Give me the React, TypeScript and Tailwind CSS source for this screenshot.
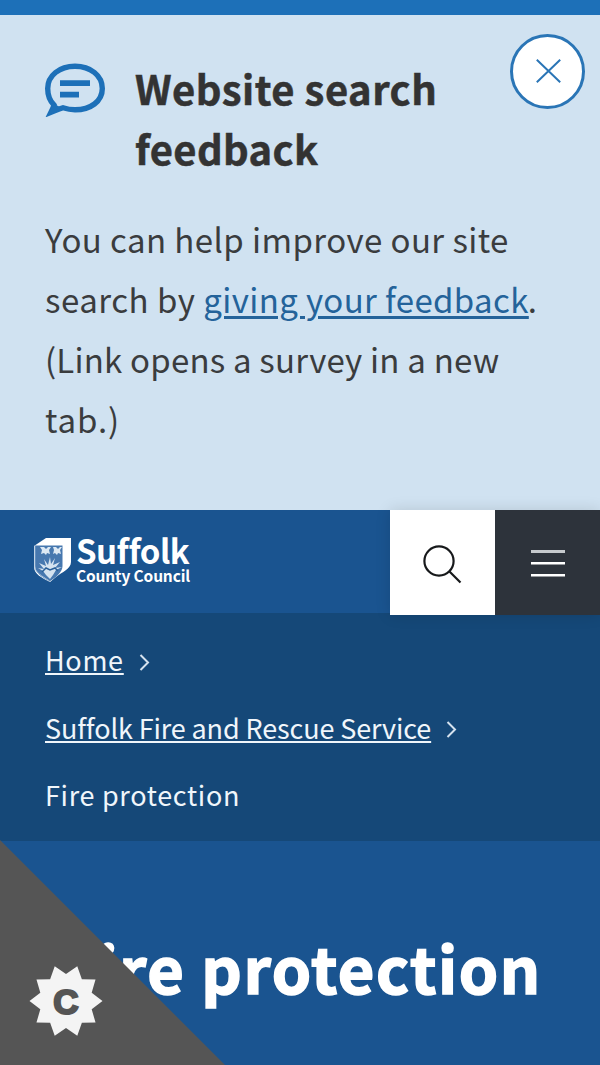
import React from 'react';

const badgePoints = Array.from({ length: 20 }, (_, i) => {
  const radius = i % 2 === 0 ? 36.5 : 27;
  const angle = (i * Math.PI) / 10;
  return `${(37 + radius * Math.cos(angle)).toFixed(2)},${(37 + radius * Math.sin(angle)).toFixed(2)}`;
}).join(' ');

const Chevron = () => (
  <svg className="mt-[5px] w-[11px] h-[17px] shrink-0" viewBox="0 0 11 17" fill="none" stroke="#d5e2ee" strokeWidth="2">
    <path d="M1.500 1 9 8.500 1.500 16" />
  </svg>
);

const FeedbackBanner = () => (
  <section className="relative h-[510px] border-t-[15px] border-[#1d70b8] bg-[#d0e2f1] pl-[45px] pt-[43px] text-[#333]">
    <div className="flex h-[120px]">
      <svg className="mt-[5px] w-[60px] h-[54px] shrink-0" viewBox="0 0 60 54" fill="none" stroke="#1d70b8">
        <path d="M9 42C4.500 37.500 2.700 32 2.700 25.500 2.700 12.500 14.500 3.200 30 3.200s27.300 9.300 27.300 22.300S45.500 46.800 30 46.800c-4 0-8-.7-12-2-4 1.300-7.500 2.700-12 4.500 1.500-3 2.500-5 3-7.300Z" strokeWidth="5.400" />
        <path d="M2 53 8 40l10 6Z" fill="#1d70b8" stroke="none" />
        <path d="M15 20.200h30M15 31.700h19" strokeWidth="5.800" />
      </svg>
      <h2 className="ml-[30px] w-[330px] text-[40px] leading-[60px] font-bold [-webkit-text-stroke:0.5px_#333]">
        <span className="block whitespace-nowrap tracking-[0.48px]">Website search</span>
        <span className="block tracking-[0.35px]">feedback</span>
      </h2>
    </div>
    <p className="mt-[31px] text-[33px] leading-[60px] whitespace-nowrap text-[#3a3c3e]">
      <span className="block tracking-[0.42px]">You can help improve our site</span>
      <span className="block tracking-[0.5px]">
        search by{' '}
        <a className="tracking-[0.36px] text-[#24639a] underline decoration-[3px] underline-offset-[3px]" href="#survey">giving your feedback</a>
        <span className="-ml-px">.</span>
      </span>
      <span className="block tracking-[0.2px]">(Link opens a survey in a new</span>
      <span className="block tracking-[0.9px]">tab.)</span>
    </p>
    <button className="absolute right-[15px] top-[19px] flex size-[75px] items-center justify-center rounded-full border-[3px] border-[#2a75b6] bg-white" aria-label="Close">
      <svg className="-mt-px ml-[2px] w-[25px] h-6" viewBox="0 0 25 24" fill="none" stroke="#2a75b6" strokeWidth="2">
        <path d="m.8.8 23.400 22.400M24.200.8.8 23.200" />
      </svg>
    </button>
  </section>
);

const Logo = () => (
  <div className="ml-[34px] mt-[27px] flex">
    <svg className="w-[38px] h-[50px]" viewBox="0 0 38 50">
      <path d="M0 9 12 1h25v24c0 7-9 10-15 15l-6 5C8 41 0 37 0 30Z" fill="#fff" />
      <path d="M1 8.500h27.500V29c0 6-6 11-13 15.500C8 40 1 36 1 29Z" fill="#4778af" />
      <path d="M6 10h4l2 2 2-2h3l-2 3 1 4-3-1-1 2-2-2-3 1 1-4Zm13 0h3l2 2 2-2h2l-2 3 1 4-3-1-1 2-2-2-2 1 1-4Z" fill="#dce8f3" />
      <path d="m16 20 1 7 4-6-2 7 7-3-5 6 7-1-6 3-3 5-3 4-4-4-3-4-5-3 6 1-5-6 7 3-2-7 4 6Z" fill="#d5e3f0" />
      <path d="m8 35 4-4 4 2 5-2 3 3" fill="none" stroke="#2a6099" strokeWidth="1.500" />
      <path d="M.8 9v21c0 5 7 9 14.700 14" fill="none" stroke="#a9c2dc" />
    </svg>
    <div className="ml-1 whitespace-nowrap text-white">
      <div className="h-[30px] text-[33px] leading-[27px] font-bold tracking-[-0.5px]">Suffolk</div>
      <div className="text-[15.5px] leading-[16px] font-bold tracking-[-0.15px]">County Council</div>
    </div>
  </div>
);

const Header = () => (
  <header className="flex h-[103px] items-start bg-[#1a5490]">
    <Logo />
    <div className="relative z-10 ml-auto flex h-[105px] w-[210px] shrink-0 shadow-[0_0_14px_rgba(0,0,0,0.13)]">
      <button className="flex size-[105px] items-center justify-center bg-white" aria-label="Search">
        <svg className="mt-[4px] w-[39px] h-10" viewBox="0 0 39 40" fill="none" stroke="#17191b" strokeWidth="2.200">
          <circle cx="16" cy="16" r="14.600" />
          <path d="m26 26 11.500 11.500" strokeWidth="2.200" />
        </svg>
      </button>
      <button className="flex size-[105px] items-center justify-center bg-[#2d333b]" aria-label="Menu">
        <svg className="w-[34px] h-7" viewBox="0 0 34 28" fill="none" stroke="#fff">
          <path d="M0 2.500h34" stroke="#c6cacd" strokeWidth="3" />
          <path d="M0 14.200h34M0 26.200h34" strokeWidth="2.400" />
        </svg>
      </button>
    </div>
  </header>
);

const Breadcrumbs = () => (
  <nav className="h-[228px] bg-[#154878] pl-[45px] pt-[13px] text-[27px] leading-[67.5px] whitespace-nowrap text-[#f0f6fb]">
    <div className="flex items-center">
      <a className="mr-[15px] tracking-[0.7px] underline decoration-2 underline-offset-[2px]" href="#home">Home</a>
      <Chevron />
    </div>
    <div className="flex items-center">
      <a className="mr-[15px] tracking-[-0.13px] underline decoration-2 underline-offset-[2px]" href="#service">Suffolk Fire and Rescue Service</a>
      <Chevron />
    </div>
    <div className="tracking-[0.68px]">Fire protection</div>
  </nav>
);

export default function App() {
  return (
    <div className="relative h-[1065px] w-[600px] overflow-hidden bg-[#1a5490] font-['Noto_Sans_CJK_SC','Noto_Sans',sans-serif]">
      <FeedbackBanner />
      <Header />
      <Breadcrumbs />
      <main className="pl-[60px] pt-[81px]">
        <h1 className="text-[63px] leading-[90px] font-bold tracking-[1.55px] whitespace-nowrap text-white [-webkit-text-stroke:1.6px_white]">Fire protection</h1>
      </main>

      {/* Cookie settings corner */}
      <button className="absolute bottom-0 left-0 h-[225px] w-[225px] bg-[#555] [clip-path:polygon(0_0,0_100%,100%_100%)]" aria-label="Cookie settings">
        <svg className="absolute left-[29px] top-[124px] size-[74px]" viewBox="0 0 74 74">
          <polygon points={badgePoints} fill="#f4f4f4" />
          <text x="37" y="49.500" textAnchor="middle" fill="#555" stroke="#555" strokeWidth="2.200" className="font-['Liberation_Sans',sans-serif] text-[35px] font-bold">C</text>
        </svg>
      </button>
    </div>
  );
}
